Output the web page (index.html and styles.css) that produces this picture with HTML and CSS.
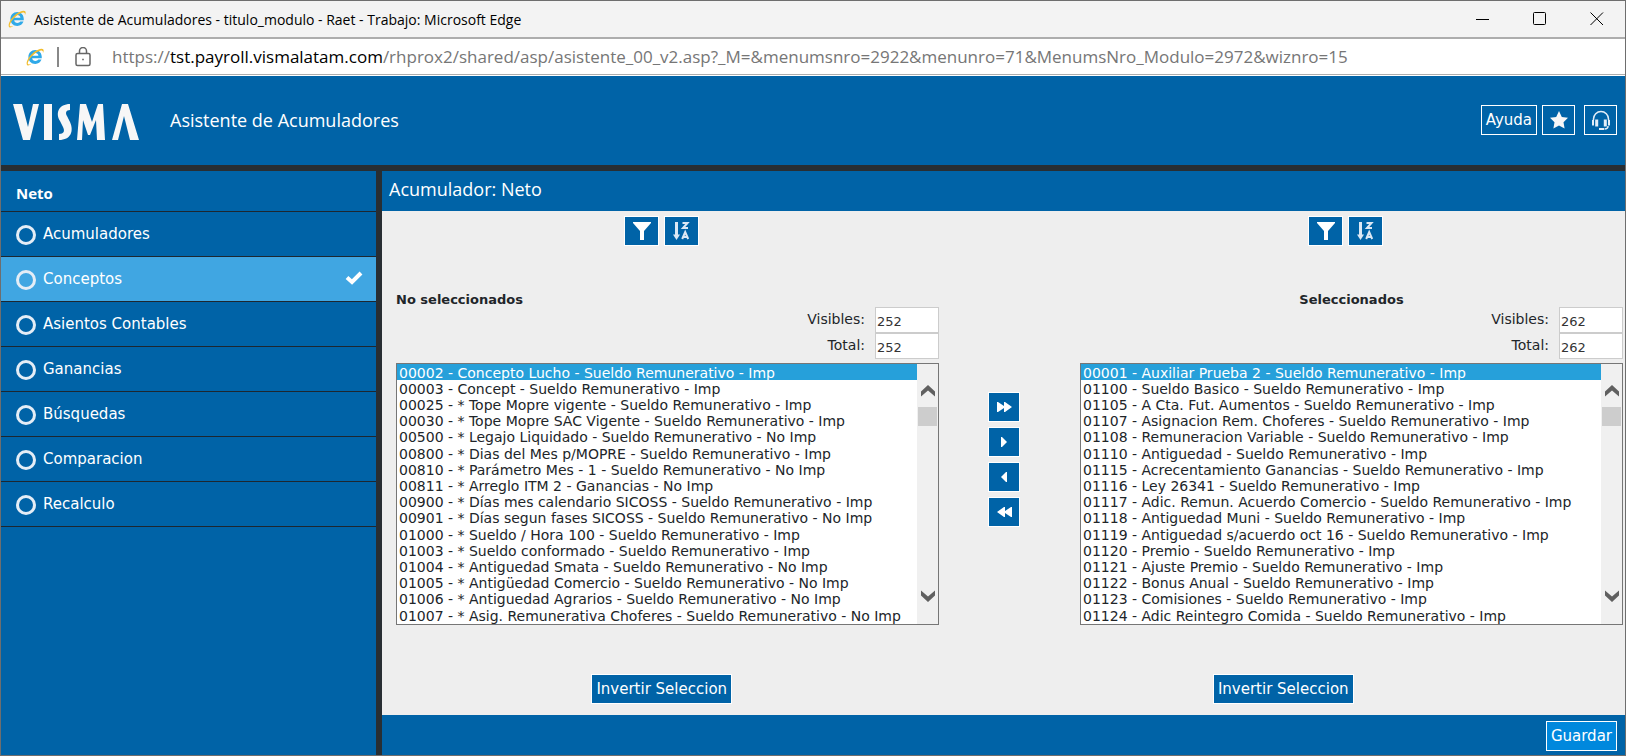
FILE: index.html
```html
<!DOCTYPE html>
<html lang="es">
<head>
<meta charset="utf-8">
<title>Asistente de Acumuladores</title>
<link rel="stylesheet" href="styles.css">
</head>
<body>
<svg class="defs" aria-hidden="true">
  <symbol id="ie" viewBox="0 0 20 20">
    <path d="M16.800 11.200H7.200c.2 1.800 1.500 2.700 3.200 2.700 1.300 0 2.300-.5 2.900-1.300h3.200c-.9 2.700-3.200 4.300-6.200 4.300-4 0-6.900-2.900-6.900-6.900S6.300 3 10.200 3s6.900 3 6.600 8.200zM13.400 8.700C13.200 7 12 6.100 10.300 6.100 8.600 6.100 7.400 7 7.200 8.700z" fill="#2fa9e8"/>
    <path d="M2.300 18.200C.2 15.800 3.500 9.300 8.800 5.200c4.300-3.300 8.600-4.500 9.600-2.600.5.900.2 2.300-.5 3.700.2-1.500 0-2.300-.8-2.600-1.500-.6-4.700.9-7.800 3.300C5.100 10.500 1.900 15.600 3 17.100c.6.700 2.100.3 4-.6-2 1.500-3.900 2.600-4.700 1.700z" fill="#f2bd2c"/>
  </symbol>
  <symbol id="filter" viewBox="0 0 20 20"><path d="M1 1h18v1l-7 8v9H8v-9L1 2z" fill="#fff"/></symbol>
  <symbol id="sort" viewBox="0 0 20 20" fill="none" stroke="#dce8f4">
    <path d="M4.500 1v14" stroke-width="3"/><path d="M1 13.500h7L4.500 19z" fill="#dce8f4" stroke="none"/>
    <path d="M10.500 2h5l-4.500 5h5" stroke-width="2"/><path d="M10.200 18l3-7 3 7M11.500 16h3.500" stroke-width="2"/>
  </symbol>
  <symbol id="up" viewBox="0 0 16 14"><path d="M1 12.500v-5L8 1l7 6.500v5L8 6.500z" fill="#606060"/></symbol>
  <symbol id="down" viewBox="0 0 16 14"><path d="M1 1.500v5L8 13l7-6.500v-5L8 7.500z" fill="#606060"/></symbol>
</svg>
<div class="window">
  <div class="titlebar">
    <svg class="ie"><use href="#ie"/></svg>
    <span class="caption">Asistente de Acumuladores - titulo_modulo - Raet - Trabajo: Microsoft Edge</span>
    <div class="controls">
      <button aria-label="Minimizar"><svg viewBox="0 0 14 14"><path d="M0 7.500h13"/></svg></button>
      <button aria-label="Maximizar"><svg viewBox="0 0 14 14"><rect x=".5" y=".5" width="12" height="12" rx="1"/></svg></button>
      <button aria-label="Cerrar"><svg viewBox="0 0 14 14"><path d="M.5.500l12.500 12.500M13 .5L.5 13"/></svg></button>
    </div>
  </div>
  <div class="address">
    <svg class="ie"><use href="#ie"/></svg>
    <span class="divider"></span>
    <svg class="lock" viewBox="0 0 16 20"><rect x="1" y="6.500" width="14" height="12" rx="1.500"/><path d="M4.500 6.500V4a3.500 3.500 0 0 1 7 0v2.500"/><path d="M7.200 12.500h1.600" stroke-width="1.600"/></svg>
    <span class="url">https://<b>tst.payroll.vismalatam.com</b>/rhprox2/shared/asp/asistente_00_v2.asp?_M=&amp;menumsnro=2922&amp;menunro=71&amp;MenumsNro_Modulo=2972&amp;wiznro=15</span>
  </div>
  <header class="header">
    <svg class="logo" viewBox="0 0 126 36" role="img" aria-label="Visma">
      <path d="M0 0h9l6 23 5-23h6l-9 36h-7zM31 0h8v36h-8zM57 0v6c-4 0-5 3-3 6l3 6c4 9 1 18-11 18v-6c5 0 6-3 4-7l-3-6C42 9 46 0 57 0zM67 0h6l6 18 6-18h5l2 36h-8l-1-20-6 15h-2l-5-15-1 20h-5zM109 0h6l11 36h-9l-6-24-6 24h-6z"/>
    </svg>
    <h1>Asistente de Acumuladores</h1>
    <div class="tools">
      <button class="btn">Ayuda</button>
      <button class="btn square" aria-label="Favoritos"><svg viewBox="0 0 20 20"><path d="M10 1l2.800 5.900 6.200.9-4.500 4.400 1.100 6.400L10 15.600l-5.600 3 1.100-6.400L1 7.800l6.200-.9z" fill="#f7f7f7"/></svg></button>
      <button class="btn square support" aria-label="Soporte"><svg viewBox="0 0 20 20" fill="none" stroke="#e4eef8" stroke-width="1.500"><path d="M2.500 10V9a7.500 7.500 0 0 1 15 0v1M17 16c0 2.500-1 3-3.500 3"/><path d="M8 19h5" stroke-width="2"/><path d="M5.700 9.500v7M14.300 9.500v7" stroke-width="3"/><path d="M2 10v5.500M18 10v5.500" stroke-width="2"/></svg></button>
    </div>
  </header>
  <div class="body">
    <nav class="sidebar">
      <h2>Neto</h2>
      <a href="#"><i></i>Acumuladores</a>
      <a href="#" class="current"><i></i>Conceptos<svg class="check" viewBox="0 0 18 14"><path d="M2 6.500l5 4.500 9-9"/></svg></a>
      <a href="#"><i></i>Asientos Contables</a>
      <a href="#"><i></i>Ganancias</a>
      <a href="#"><i></i>Búsquedas</a>
      <a href="#"><i></i>Comparacion</a>
      <a href="#"><i></i>Recalculo</a>
    </nav>
    <main class="main">
      <h2 class="title">Acumulador: Neto</h2>
      <div class="content">
        <div class="lists">
          <section class="column">
            <div class="sorting">
              <button class="btn" aria-label="Filtrar"><svg><use href="#filter"/></svg></button>
              <button class="btn" aria-label="Ordenar"><svg><use href="#sort"/></svg></button>
            </div>
            <h3>No seleccionados</h3>
            <div class="counts">
              <label for="v1">Visibles:</label><input id="v1" value="252">
              <label for="t1">Total:</label><input id="t1" value="252">
            </div>
            <div class="listbox">
              <select multiple aria-label="No seleccionados">
                <option selected>00002 - Concepto Lucho - Sueldo Remunerativo - Imp</option>
                <option>00003 - Concept - Sueldo Remunerativo - Imp</option>
                <option>00025 - * Tope Mopre vigente - Sueldo Remunerativo - Imp</option>
                <option>00030 - * Tope Mopre SAC Vigente - Sueldo Remunerativo - Imp</option>
                <option>00500 - * Legajo Liquidado - Sueldo Remunerativo - No Imp</option>
                <option>00800 - * Dias del Mes p/MOPRE - Sueldo Remunerativo - Imp</option>
                <option>00810 - * Parámetro Mes - 1 - Sueldo Remunerativo - No Imp</option>
                <option>00811 - * Arreglo ITM 2 - Ganancias - No Imp</option>
                <option>00900 - * Días mes calendario SICOSS - Sueldo Remunerativo - Imp</option>
                <option>00901 - * Días segun fases SICOSS - Sueldo Remunerativo - No Imp</option>
                <option>01000 - * Sueldo / Hora 100 - Sueldo Remunerativo - Imp</option>
                <option>01003 - * Sueldo conformado - Sueldo Remunerativo - Imp</option>
                <option>01004 - * Antiguedad Smata - Sueldo Remunerativo - No Imp</option>
                <option>01005 - * Antigüedad Comercio - Sueldo Remunerativo - No Imp</option>
                <option>01006 - * Antiguedad Agrarios - Sueldo Remunerativo - No Imp</option>
                <option>01007 - * Asig. Remunerativa Choferes - Sueldo Remunerativo - No Imp</option>
              </select>
              <div class="scroll" aria-hidden="true"><svg><use href="#up"/></svg><span class="thumb"></span><svg><use href="#down"/></svg></div>
            </div>
          </section>
          <div class="transfer">
            <button class="btn" aria-label="Agregar todos"><svg viewBox="0 0 18 12"><path d="M2 1h1l6 4V1h1l7 5-7 5H9V7l-6 4H2z"/></svg></button>
            <button class="btn" aria-label="Agregar"><svg viewBox="0 0 18 12"><path d="M6 1h1l5 5-5 5H6z"/></svg></button>
            <button class="btn" aria-label="Quitar"><svg viewBox="0 0 18 12"><path d="M12 1h-1L6 6l5 5h1z"/></svg></button>
            <button class="btn" aria-label="Quitar todos"><svg viewBox="0 0 18 12"><path d="M17 1h-1l-6 4V1H9L2 6l7 5h1V7l6 4h1z"/></svg></button>
          </div>
          <section class="column">
            <div class="sorting">
              <button class="btn" aria-label="Filtrar"><svg><use href="#filter"/></svg></button>
              <button class="btn" aria-label="Ordenar"><svg><use href="#sort"/></svg></button>
            </div>
            <h3 class="centered">Seleccionados</h3>
            <div class="counts">
              <label for="v2">Visibles:</label><input id="v2" value="262">
              <label for="t2">Total:</label><input id="t2" value="262">
            </div>
            <div class="listbox">
              <select multiple aria-label="Seleccionados">
                <option selected>00001 - Auxiliar Prueba 2 - Sueldo Remunerativo - Imp</option>
                <option>01100 - Sueldo Basico - Sueldo Remunerativo - Imp</option>
                <option>01105 - A Cta. Fut. Aumentos - Sueldo Remunerativo - Imp</option>
                <option>01107 - Asignacion Rem. Choferes - Sueldo Remunerativo - Imp</option>
                <option>01108 - Remuneracion Variable - Sueldo Remunerativo - Imp</option>
                <option>01110 - Antiguedad - Sueldo Remunerativo - Imp</option>
                <option>01115 - Acrecentamiento Ganancias - Sueldo Remunerativo - Imp</option>
                <option>01116 - Ley 26341 - Sueldo Remunerativo - Imp</option>
                <option>01117 - Adic. Remun. Acuerdo Comercio - Sueldo Remunerativo - Imp</option>
                <option>01118 - Antiguedad Muni - Sueldo Remunerativo - Imp</option>
                <option>01119 - Antiguedad s/acuerdo oct 16 - Sueldo Remunerativo - Imp</option>
                <option>01120 - Premio - Sueldo Remunerativo - Imp</option>
                <option>01121 - Ajuste Premio - Sueldo Remunerativo - Imp</option>
                <option>01122 - Bonus Anual - Sueldo Remunerativo - Imp</option>
                <option>01123 - Comisiones - Sueldo Remunerativo - Imp</option>
                <option>01124 - Adic Reintegro Comida - Sueldo Remunerativo - Imp</option>
              </select>
              <div class="scroll" aria-hidden="true"><svg><use href="#up"/></svg><span class="thumb"></span><svg><use href="#down"/></svg></div>
            </div>
          </section>
        </div>
        <div class="invert">
          <div><button class="btn">Invertir Seleccion</button></div>
          <div><button class="btn">Invertir Seleccion</button></div>
        </div>
      </div>
      <footer class="footer"><button class="btn save">Guardar</button></footer>
    </main>
  </div>
</div>
</body>
</html>
```
FILE: styles.css
```css
* { box-sizing: border-box; }
body { margin: 0; font-family: Verdana, "DejaVu Sans", sans-serif; font-size: 13px; color: #212529; }
h1, h2, h3 { margin: 0; font-weight: 400; }
button { font: inherit; margin: 0; }
svg { display: block; flex: none; }
.defs { position: absolute; width: 0; height: 0; }

.window { display: flex; flex-direction: column; min-height: 100vh; border: 1px solid #6e6e6e; background: #fff; }
.titlebar { display: flex; align-items: center; height: 38px; padding-left: 6px; background: #f3f3f3; border-bottom: 2px solid #adadad; font-family: "Open Sans", sans-serif; font-size: 14px; color: #000; }
.ie { width: 20px; height: 20px; }
.caption { flex: 1; margin-left: 7px; }
.controls { display: flex; }
.controls button { width: 57px; height: 36px; padding: 0; border: 0; background: none; display: grid; place-items: center; }
.controls svg { width: 14px; height: 14px; fill: none; stroke: #000; }

.address { display: flex; align-items: center; height: 36px; padding-left: 24px; border-bottom: 1px solid #adadad; font-family: "Open Sans", sans-serif; font-size: 17px; color: #767676; white-space: nowrap; overflow: hidden; }
.divider { width: 2px; height: 20px; margin: 0 16px 0 12px; background: #888; }
.lock { width: 16px; height: 20px; fill: none; stroke: #666; stroke-width: 1.500px; }
.url { margin-left: 21px; }
.url b { font-weight: 400; color: #000; }

.header { display: flex; align-items: center; height: 89px; margin-top: 1px; padding: 0 8px 2px 12px; background: #0063a7; color: #fff; }
.logo { width: 126px; height: 36px; margin-top: 5px; fill: #f7f7f7; }
.header h1 { flex: 1; margin-left: 31px; font-family: "Open Sans", sans-serif; font-size: 18px; }
.tools { display: flex; gap: 5px; }
.btn { display: inline-flex; align-items: center; justify-content: center; height: 30px; padding: 0 4px; border: 1px solid #fff; background: #0063a7; color: #fff; font-size: 15px; white-space: nowrap; }
.square { width: 33px; }
.square svg { width: 20px; height: 20px; }
.support { margin-left: 4px; }

.body { flex: 1; display: grid; grid-template-columns: 375px 1fr; gap: 6px; padding-top: 6px; background: #282e33; }
.sidebar { background: #0063a7; color: #fff; font-size: 15px; }
.sidebar h2 { height: 41px; padding: 4px 15px 0; line-height: 36px; font-family: "Open Sans", sans-serif; font-size: 15px; font-weight: 700; border-bottom: 1px solid #1d2730; }
.sidebar a { display: flex; align-items: center; height: 45px; padding: 0 13px 0 15px; border-bottom: 1px solid #1d2730; color: #fff; text-decoration: none; }
.sidebar i { width: 20px; height: 20px; margin: 2px 7px 0 0; border: 3px solid #e4edf6; border-radius: 50%; }
.sidebar .current { background: #40a6e2; }
.check { width: 18px; height: 14px; margin-left: auto; margin-bottom: 3px; fill: none; stroke: #fff; stroke-width: 4px; }

.main { display: flex; flex-direction: column; min-width: 0; background: #eee; }
.title { height: 40px; padding-left: 7px; line-height: 36px; background: #0063a7; color: #fff; font-family: "Open Sans", sans-serif; font-size: 18px; }
.content { flex: 1; }
.lists { display: grid; grid-template-columns: 1fr 141px 1fr; padding: 5px 2px 0 14px; }
.column { min-width: 0; }
.sorting { display: flex; justify-content: center; gap: 5px; padding-right: 12px; }
.sorting .btn { width: 35px; padding: 0; }
.sorting svg { width: 20px; height: 20px; }
.column h3 { margin-top: 45px; height: 16px; line-height: 18px; font-size: 13px; font-weight: 700; }
.column .centered { text-align: center; }
.counts { display: grid; grid-template-columns: 1fr 64px; column-gap: 10px; text-align: right; font-size: 14px; line-height: 24px; }
.counts input { width: 100%; height: 26px; padding: 3px 0 0 1px; border: 1px solid #ccc; background: #fff; font: inherit; font-size: 13px; line-height: 20px; color: #333; outline: 0; }
.listbox { display: flex; height: 262px; margin-top: 4px; border: 1px solid #767676; background: #fff; }
select { flex: 1; min-width: 0; height: 100%; padding: 0; border: 0; border-radius: 0; background: #fff; font: inherit; font-size: 14px; color: #212529; outline: 0; scrollbar-width: none; }
option { height: 16px; min-height: 16px; padding: 1px 2px 0; line-height: 16px; }
option:nth-child(5n) { height: 17px; }
option:checked { background: linear-gradient(#26a0da, #26a0da); -webkit-text-fill-color: #fff; }
.scroll { display: flex; flex-direction: column; align-items: center; width: 21px; padding: 20px 0 21px; background: #f0f0f0; }
.scroll svg { width: 16px; height: 14px; }
.thumb { width: 19px; height: 19px; margin: 9px 0 auto; background: #cdcdcd; }
.transfer { display: flex; flex-direction: column; align-items: center; gap: 5px; padding: 176px 11px 0 0; }
.transfer .btn { width: 32px; padding: 0; }
.transfer svg { width: 18px; height: 12px; fill: #fff; }
.invert { display: grid; grid-template-columns: 1fr 1fr; margin-top: 49px; }
.invert div { padding-right: 62px; text-align: center; }
.footer { display: flex; justify-content: flex-end; padding: 6px 8px 4px; background: #0063a7; }
.save { background: #0088dd; }
```
